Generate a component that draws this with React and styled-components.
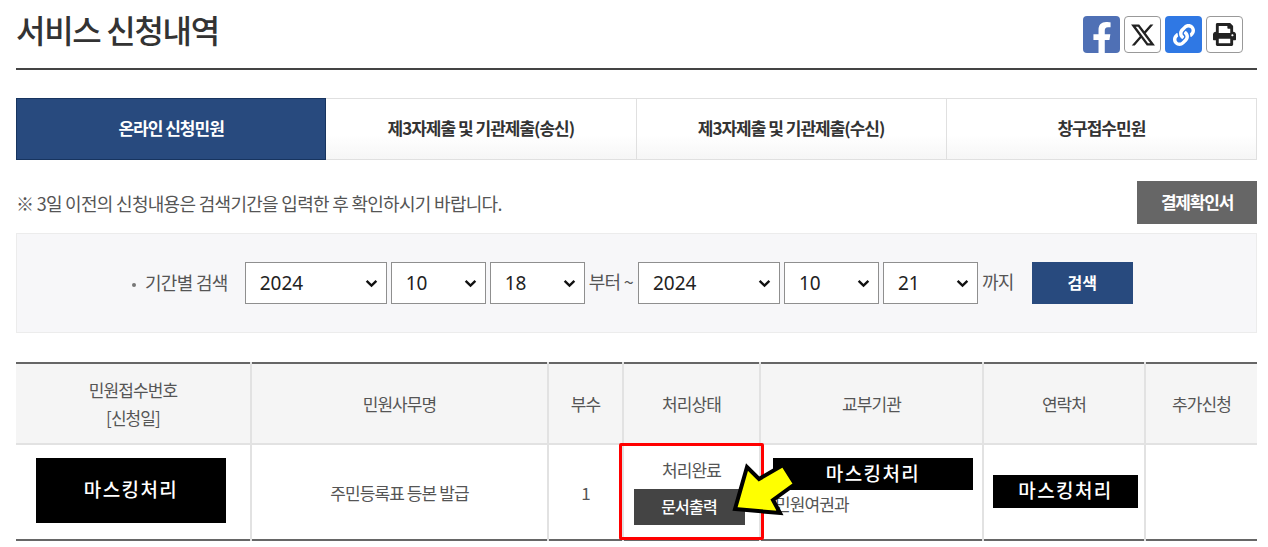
import React from "react"
import styled, { createGlobalStyle } from "styled-components"
import { FaFacebookF, FaLink, FaPrint } from "react-icons/fa"
import { RiTwitterXLine } from "react-icons/ri"

const Global = createGlobalStyle`
  html, body {
    margin: 0;
    padding: 0;
    background: #fff;
    font-family: "Noto Sans CJK KR", "Noto Sans", sans-serif;
    color: #555;
  }
`

const chevron = `url("data:image/svg+xml,%3Csvg xmlns='http://www.w3.org/2000/svg' viewBox='0 0 12 8'%3E%3Cpath d='M1.5 1.5 6 6l4.5-4.5' fill='none' stroke='%23111' stroke-width='2.2'/%3E%3C/svg%3E")`

const Page = styled.div`
  width: 1241px;
  height: 547px;
  margin-left: 16px;
  overflow: hidden;
`

const Header = styled.header`
  height: 68px;
  display: flex;
  justify-content: space-between;
  border-bottom: 2px solid #444;
`

const Title = styled.h1`
  margin: 7px 0 0;
  font-size: 32px;
  line-height: 44px;
  font-weight: 500;
  letter-spacing: -1.3px;
  color: #333;
`

const Share = styled.div`
  display: flex;
  gap: 4px;
  margin: 16px 14px 0 0;
`

const ShareBtn = styled.span`
  width: 37px;
  height: 37px;
  box-sizing: border-box;
  display: flex;
  align-items: center;
  justify-content: center;
  border-radius: 4px;
  background: ${p => p.$bg || "#fff"};
  color: ${p => p.$fg || "#222"};
  border: ${p => (p.$bg ? "none" : "1px solid #999")};
  font-size: ${p => p.$size || 20}px;
  overflow: hidden;
`

const Tabs = styled.nav`
  display: grid;
  grid-template-columns: repeat(4, 1fr);
  height: 62px;
  margin-top: 28px;
`

const Tab = styled.div`
  display: flex;
  align-items: center;
  justify-content: center;
  box-sizing: border-box;
  padding-bottom: 4px;
  font-size: 17px;
  font-weight: 700;
  letter-spacing: -1px;
  color: ${p => (p.$active ? "#fff" : "#333")};
  background: ${p => (p.$active ? "#284a7e" : "linear-gradient(#fff 60%, #f6f6f6)")};
  border: 1px solid ${p => (p.$active ? "#17345f" : "#e0e0e0")};
  border-left-width: ${p => (p.$active ? 1 : 0)}px;
`

const Notice = styled.div`
  display: flex;
  justify-content: space-between;
  align-items: center;
  height: 43px;
  margin-top: 21px;
`

const NoticeText = styled.p`
  margin: 0;
  font-size: 18px;
  letter-spacing: -0.7px;
  color: #555;
`

const GreyBtn = styled.button`
  width: 120px;
  height: 43px;
  border: 0;
  padding: 0 0 2px;
  background: #666;
  color: #fff;
  font: 700 17px "Noto Sans CJK KR", sans-serif;
  letter-spacing: -1.2px;
`

const SearchBox = styled.div`
  height: 100px;
  box-sizing: border-box;
  margin-top: 9px;
  padding-left: 115px;
  display: flex;
  align-items: center;
  background: #f7f7f9;
  border: 1px solid #ececec;
`

const Label = styled.span`
  font-size: 18px;
  letter-spacing: -0.7px;
  color: #555;
  white-space: nowrap;
  margin: ${p => p.$m || "0"};
  position: relative;
  top: ${p => p.$top ?? -2}px;
`

const Bullet = styled.i`
  display: inline-block;
  width: 4px;
  height: 4px;
  margin-right: 9px;
  border-radius: 50%;
  background: #777;
  vertical-align: middle;
`

const Select = styled.select`
  width: ${p => p.$w}px;
  height: 42px;
  box-sizing: border-box;
  margin-right: ${p => p.$mr ?? 4}px;
  padding: 0 0 0 14px;
  appearance: none;
  border: 1.5px solid #8f8f8f;
  border-radius: 0;
  background: #fff ${chevron} no-repeat right 8px center / 13px 9px;
  color: #222;
  font: 400 19px "Noto Sans", sans-serif;
`

const SearchBtn = styled.button`
  width: 101px;
  height: 42px;
  margin-left: 18px;
  padding: 0 0 2px;
  border: 0;
  background: #284a7e;
  color: #fff;
  font: 700 16px "Noto Sans CJK KR", sans-serif;
`

const TableWrap = styled.div`
  position: relative;
  margin-top: 29px;
`

const Table = styled.table`
  width: 100%;
  table-layout: fixed;
  border-collapse: collapse;
  border-top: 2px solid #666;
  border-bottom: 2px solid #666;
  font-size: 17px;
  letter-spacing: -0.9px;
  color: #555;
  text-align: center;
  th, td {
    padding: 0;
    font-weight: 400;
    border-left: 2px solid #e2e2e2;
  }
  th:first-child, td:first-child {
    border-left: 0;
  }
  th {
    height: 79px;
    background: #f5f5f5;
    border-bottom: 2px solid #e2e2e2;
    line-height: 28px;
  }
  td {
    height: 94px;
    background: #fff;
  }
`

const Status = styled.div`
  display: flex;
  flex-direction: column;
  align-items: center;
  gap: 7px;
  padding-bottom: 2px;
`

const PrintBtn = styled.button`
  width: 111px;
  height: 36px;
  margin-left: -5px;
  border: 0;
  padding: 0 0 2px;
  background: #444;
  color: #fff;
  font: 500 16px "Noto Sans CJK KR", sans-serif;
  letter-spacing: -0.8px;
`

const Office = styled.span`
  display: block;
  text-align: left;
  padding: 23px 0 0 14px;
`

const Mask = styled.div`
  position: absolute;
  left: ${p => p.$x}px;
  top: ${p => p.$y}px;
  width: ${p => p.$w}px;
  height: ${p => p.$h}px;
  box-sizing: border-box;
  padding-bottom: 4px;
  display: flex;
  align-items: center;
  justify-content: center;
  background: #000;
  color: #fff;
  font-family: "Noto Sans CJK KR", sans-serif;
  font-size: 19px;
  font-weight: 500;
  letter-spacing: 1.4px;
`

const RedBox = styled.div`
  position: absolute;
  left: 603px;
  top: 81px;
  width: 139px;
  height: 91px;
  border: 3px solid #f00;
  border-radius: 2px;
  pointer-events: none;
`

const Arrow = styled.svg`
  position: absolute;
  left: 715px;
  top: 90px;
  width: 80px;
  height: 70px;
`

const cols = [235, 297, 75, 137, 223, 162, 112]

export default function App() {
  return (
    <Page>
      <Global />
      <Header>
        <Title>서비스 신청내역</Title>
        <Share>
          <ShareBtn $bg="#4f70b5" $fg="#fff" $size={32}><FaFacebookF style={{ marginTop: 6 }} /></ShareBtn>
          <ShareBtn $size={28}><RiTwitterXLine /></ShareBtn>
          <ShareBtn $bg="#2f78e4" $fg="#fff" $size={22}><FaLink /></ShareBtn>
          <ShareBtn $size={23}><FaPrint /></ShareBtn>
        </Share>
      </Header>

      <Tabs>
        <Tab $active>온라인 신청민원</Tab>
        <Tab>제3자제출 및 기관제출(송신)</Tab>
        <Tab>제3자제출 및 기관제출(수신)</Tab>
        <Tab>창구접수민원</Tab>
      </Tabs>

      <Notice>
        <NoticeText>※ 3일 이전의 신청내용은 검색기간을 입력한 후 확인하시기 바랍니다.</NoticeText>
        <GreyBtn>결제확인서</GreyBtn>
      </Notice>

      <SearchBox>
        <Label $m="0 17px 0 0" $top={-1}><Bullet />기간별 검색</Label>
        <Select $w={142} defaultValue="2024"><option>2024</option></Select>
        <Select $w={95} defaultValue="10"><option>10</option></Select>
        <Select $w={95} defaultValue="18"><option>18</option></Select>
        <Label $m="0 5px 0 0">부터 ~</Label>
        <Select $w={142} defaultValue="2024"><option>2024</option></Select>
        <Select $w={95} defaultValue="10"><option>10</option></Select>
        <Select $w={95} defaultValue="21"><option>21</option></Select>
        <Label>까지</Label>
        <SearchBtn>검색</SearchBtn>
      </SearchBox>

      <TableWrap>
        <Table>
          <colgroup>
            {cols.map((w, i) => <col key={i} style={{ width: w }} />)}
          </colgroup>
          <thead>
            <tr>
              <th>민원접수번호<br />[신청일]</th>
              <th>민원사무명</th>
              <th>부수</th>
              <th>처리상태</th>
              <th>교부기관</th>
              <th>연락처</th>
              <th>추가신청</th>
            </tr>
          </thead>
          <tbody>
            <tr>
              <td></td>
              <td>주민등록표 등본 발급</td>
              <td>1</td>
              <td>
                <Status>
                  처리완료
                  <PrintBtn>문서출력</PrintBtn>
                </Status>
              </td>
              <td><Office>민원여권과</Office></td>
              <td></td>
              <td></td>
            </tr>
          </tbody>
        </Table>
        <Mask $x={20} $y={96} $w={190} $h={65}>마스킹처리</Mask>
        <Mask $x={757} $y={96} $w={200} $h={32}>마스킹처리</Mask>
        <Mask $x={977} $y={113} $w={145} $h={33}>마스킹처리</Mask>
        <RedBox />
        <Arrow viewBox="0 0 80 70">
          <polygon points="4,57 16,15 28,27 52,13 64,32 42,48 49,61" fill="#ff0" stroke="#000" strokeWidth="4" />
        </Arrow>
      </TableWrap>
    </Page>
  )
}
